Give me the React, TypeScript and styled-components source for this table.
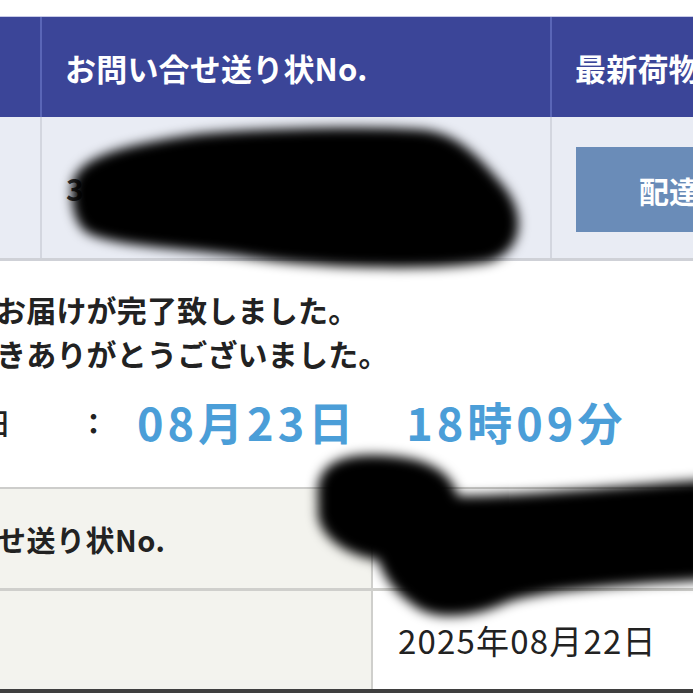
import React from "react";
import styled, { createGlobalStyle } from "styled-components";

const GlobalStyle = createGlobalStyle`
  html, body { margin: 0; padding: 0; background: #ffffff; }
  body { overflow: hidden; }
`;

const FONT = `"Noto Sans CJK JP", "Noto Sans", "Liberation Sans", sans-serif`;

const Page = styled.div`
  position: relative;
  width: 693px;
  height: 693px;
  overflow: hidden;
  background: #ffffff;
  font-family: ${FONT};
  color: #222;
`;

const TopGap = styled.div`
  height: 16px;
  background: #ffffff;
`;

const HeaderRow = styled.div`
  display: grid;
  grid-template-columns: 40px 510px 1fr;
  height: 100px;
  background: #3b4598;
  border-top: 1px solid #c8cbe8;
`;

const HeadCell = styled.div<{ $first?: boolean }>`
  display: flex;
  align-items: center;
  padding-left: ${(p) => (p.$first ? 0 : 23)}px;
  border-left: ${(p) => (p.$first ? "none" : "2px solid #5a66b7")};
  color: #ffffff;
  font-weight: 700;
  font-size: 31px;
  letter-spacing: 0.2px;
  white-space: nowrap;
  overflow: hidden;
`;

const DataRow = styled.div`
  display: grid;
  grid-template-columns: 40px 510px 1fr;
  height: 141px;
  background: #e9ecf4;
  border-bottom: 3px solid #cfd1d7;
`;

const DataCell = styled.div<{ $first?: boolean }>`
  display: flex;
  align-items: center;
  padding-left: ${(p) => (p.$first ? 0 : 24)}px;
  border-left: ${(p) => (p.$first ? "none" : "2px solid #d3d6df")};
  font-size: 30px;
  font-weight: 700;
  color: #333;
  white-space: nowrap;
  overflow: hidden;
`;

const StatusButton = styled.div`
  display: flex;
  align-items: center;
  height: 85px;
  width: 200px;
  margin-top: 4px;
  padding-left: 63px;
  box-sizing: border-box;
  background: #6a8cb8;
  color: #ffffff;
  font-size: 30px;
  font-weight: 700;
  white-space: nowrap;
`;

const Message = styled.div`
  display: flex;
  flex-direction: column;
  height: 226px;
  padding-top: 26px;
  box-sizing: border-box;
`;

const MessageLine = styled.div`
  margin-left: -4px;
  font-size: 30px;
  font-weight: 700;
  line-height: 44px;
  letter-spacing: 0.2px;
  color: #222;
  white-space: nowrap;
`;

const DateLine = styled.div`
  display: flex;
  align-items: center;
  margin-top: 14px;
  white-space: nowrap;
`;

const DateLabel = styled.span`
  margin-left: -18px;
  width: 97px;
  font-size: 29px;
  font-weight: 500;
  color: #222;
`;

const Colon = styled.span`
  width: 58px;
  font-size: 29px;
  font-weight: 700;
  color: #222;
`;

const DateValue = styled.span`
  font-size: 45px;
  font-weight: 700;
  color: #4b9ed8;
  letter-spacing: 4px;
`;

const InfoTable = styled.div`
  border-top: 2px solid #cdcdcb;
`;

const InfoRow = styled.div<{ $last?: boolean }>`
  display: grid;
  grid-template-columns: 371px 1fr;
  height: ${(p) => (p.$last ? 98 : 99)}px;
  border-bottom: ${(p) => (p.$last ? "4px solid #3f3f3f" : "3px solid #cfcfcc")};
`;

const InfoLabel = styled.div`
  display: flex;
  align-items: center;
  margin-left: -3px;
  background: #f3f3ee;
  font-size: 29px;
  font-weight: 700;
  letter-spacing: 0.5px;
  color: #222;
  white-space: nowrap;
  overflow: hidden;
`;

const InfoValue = styled.div`
  display: flex;
  align-items: center;
  padding-left: 25px;
  border-left: 2px solid #cfcfcc;
  background: #ffffff;
  font-size: 33px;
  font-weight: 400;
  letter-spacing: 1.2px;
  color: #222;
  white-space: nowrap;
`;

const Redaction = styled.svg`
  position: absolute;
  left: 0;
  top: 0;
  width: 693px;
  height: 693px;
  pointer-events: none;
`;

export default function App() {
  return (
    <>
      <GlobalStyle />
      <Page>
        <TopGap />
        <HeaderRow>
          <HeadCell $first />
          <HeadCell>お問い合せ送り状No.</HeadCell>
          <HeadCell>最新荷物状況</HeadCell>
        </HeaderRow>
        <DataRow>
          <DataCell $first />
          <DataCell>3</DataCell>
          <DataCell>
            <StatusButton>配達完了</StatusButton>
          </DataCell>
        </DataRow>
        <Message>
          <MessageLine>お届けが完了致しました。</MessageLine>
          <MessageLine>きありがとうございました。</MessageLine>
          <DateLine>
            <DateLabel>日</DateLabel>
            <Colon>：</Colon>
            <DateValue>08月23日　18時09分</DateValue>
          </DateLine>
        </Message>
        <InfoTable>
          <InfoRow>
            <InfoLabel>せ送り状No.</InfoLabel>
            <InfoValue />
          </InfoRow>
          <InfoRow $last>
            <InfoLabel />
            <InfoValue>2025年08月22日</InfoValue>
          </InfoRow>
        </InfoTable>
        <Redaction viewBox="0 0 693 693">
          <defs>
            <filter id="soft" x="-20%" y="-20%" width="140%" height="140%">
              <feGaussianBlur stdDeviation="6" />
            </filter>
          </defs>
          <path
            filter="url(#soft)"
            fill="#000"
            d="M 72 192 C 70 160, 112 146, 200 134 C 280 127, 380 126, 425 130 C 455 134, 475 152, 500 182 C 528 212, 524 252, 488 262 C 430 272, 310 268, 240 256 C 180 248, 110 246, 86 232 C 74 222, 72 206, 72 192 Z"
          />
          <path
            filter="url(#soft)"
            fill="#000"
            d="M 318 498 C 314 464, 342 454, 376 455 C 422 456, 450 468, 458 496 C 520 496, 620 486, 705 480 L 705 580 C 620 585, 545 590, 508 602 C 474 618, 432 622, 412 604 C 392 590, 384 576, 378 560 C 350 556, 322 540, 318 516 Z"
          />
        </Redaction>
      </Page>
    </>
  );
}
